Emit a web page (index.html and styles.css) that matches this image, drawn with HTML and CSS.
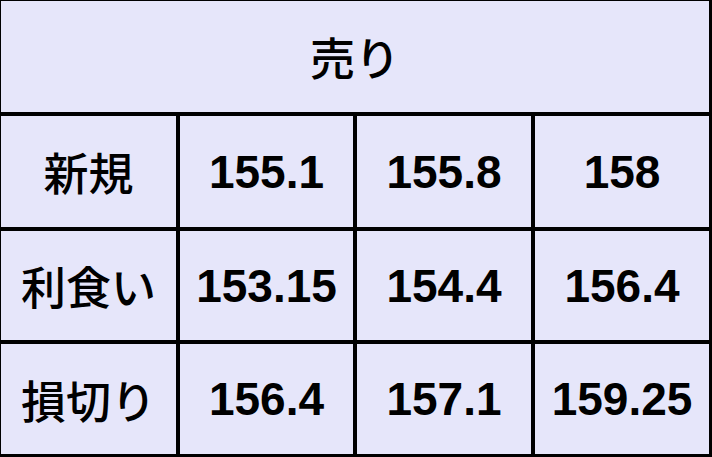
FILE: index.html
```html
<!DOCTYPE html>
<html lang="ja">
<head>
<meta charset="utf-8">
<title>売り</title>
<link rel="stylesheet" href="styles.css">
</head>
<body>
<div class="table">
  <div class="cell head jp">売り</div>
  <div class="cell jp">新規</div>
  <div class="cell num">155.1</div>
  <div class="cell num">155.8</div>
  <div class="cell num">158</div>
  <div class="cell jp">利食い</div>
  <div class="cell num">153.15</div>
  <div class="cell num">154.4</div>
  <div class="cell num">156.4</div>
  <div class="cell jp">損切り</div>
  <div class="cell num">156.4</div>
  <div class="cell num">157.1</div>
  <div class="cell num">159.25</div>
</div>
</body>
</html>
```

FILE: styles.css
```css
html, body {
  margin: 0;
  padding: 0;
  background: #e6e6fa;
}
.table {
  width: 712px;
  height: 457px;
  box-sizing: border-box;
  display: grid;
  grid-template-columns: 175px 173px 174px 174px;
  grid-template-rows: 111px 111px 109px 110px;
  gap: 4px;
  padding: 1px 3px 3px 1px;
  background: #000;
}
.cell {
  background: #e6e6fa;
  display: flex;
  align-items: center;
  justify-content: center;
  color: #000;
}
.head {
  grid-column: 1 / 5;
}
.jp {
  font-family: "Noto Sans CJK JP", sans-serif;
  font-weight: 500;
  font-size: 45px;
}
.num {
  font-family: "Liberation Sans", Arial, sans-serif;
  font-weight: 700;
  font-size: 46px;
}
```
